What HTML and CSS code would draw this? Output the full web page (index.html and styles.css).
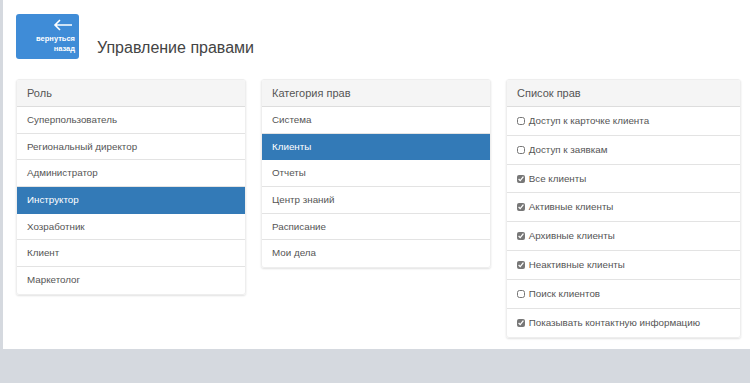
FILE: index.html
```html
<!DOCTYPE html>
<html lang="ru">
<head>
  <meta charset="UTF-8">
  <title>Управление правами</title>
  <link rel="stylesheet" href="styles.css">
</head>
<body>
  <div class="page">
    <header class="top">
      <a class="back-btn" href="#">
        <svg class="back-icon" width="20" height="12" viewBox="0 0 20 12">
          <path d="M19 6H2M7 1L2 6l5 5" fill="none" stroke="#fff" stroke-width="1.6"/>
        </svg>
        <span>вернуться<br>назад</span>
      </a>
      <h1>Управление правами</h1>
    </header>

    <main class="columns">
      <section class="panel">
        <div class="panel-head">Роль</div>
        <ul class="list">
          <li>Суперпользователь</li>
          <li>Региональный директор</li>
          <li>Администратор</li>
          <li class="active">Инструктор</li>
          <li>Хозработник</li>
          <li>Клиент</li>
          <li>Маркетолог</li>
        </ul>
      </section>

      <section class="panel">
        <div class="panel-head">Категория прав</div>
        <ul class="list">
          <li>Система</li>
          <li class="active">Клиенты</li>
          <li>Отчеты</li>
          <li>Центр знаний</li>
          <li>Расписание</li>
          <li>Мои дела</li>
        </ul>
      </section>

      <section class="panel wide">
        <div class="panel-head">Список прав</div>
        <ul class="list checks">
          <li><label><input type="checkbox"> Доступ к карточке клиента</label></li>
          <li><label><input type="checkbox"> Доступ к заявкам</label></li>
          <li><label><input type="checkbox" checked> Все клиенты</label></li>
          <li><label><input type="checkbox" checked> Активные клиенты</label></li>
          <li><label><input type="checkbox" checked> Архивные клиенты</label></li>
          <li><label><input type="checkbox" checked> Неактивные клиенты</label></li>
          <li><label><input type="checkbox"> Поиск клиентов</label></li>
          <li><label><input type="checkbox" checked> Показывать контактную информацию</label></li>
        </ul>
      </section>
    </main>
  </div>
  <div class="footer"></div>
</body>
</html>
```

FILE: styles.css
```css
* {
  margin: 0;
  padding: 0;
  box-sizing: border-box;
}

body {
  font-family: 'Liberation Sans', Arial, sans-serif;
  background-color: #d5d9df;
  color: #555;
}

.page {
  background-color: #fff;
  margin-left: 3px;
  height: 349px;
  padding: 14px 9px 0 13px;
}

.top {
  display: flex;
  align-items: flex-end;
  gap: 18px;
  height: 45px;
}

.back-btn {
  width: 63px;
  height: 45px;
  background-color: #3f8cd7;
  border-radius: 3px;
  color: #fff;
  text-decoration: none;
  display: flex;
  flex-direction: column;
  align-items: flex-end;
  padding: 5px 4px 0 0;
  font-size: 7.5px;
  font-weight: bold;
  line-height: 10px;
  text-align: right;
}

.back-icon {
  margin: 0 2px 3px 0;
}

h1 {
  font-size: 16px;
  font-weight: normal;
  color: #444;
  margin-bottom: 2px;
}

.columns {
  display: grid;
  grid-template-columns: 230px 230px 235px;
  gap: 15px;
  margin-top: 20px;
  align-items: start;
}

.panel {
  border-radius: 3px;
  box-shadow: 0 1px 2px rgba(0, 0, 0, 0.12);
  border: 1px solid #eee;
  overflow: hidden;
}

.panel-head {
  background-color: #f5f5f5;
  border-bottom: 1px solid #ddd;
  height: 27px;
  padding: 0 10px;
  line-height: 26px;
  font-size: 11px;
  color: #555;
}

.list {
  list-style: none;
}

.list li {
  font-size: 9.8px;
  color: #555;
  padding: 0 10px;
  height: 26.7px;
  line-height: 26px;
  border-bottom: 1px solid #e3e3e3;
}

.list li:last-child {
  border-bottom: none;
}

.list li.active {
  background-color: #337ab7;
  color: #fff;
  border-color: #337ab7;
}

.checks li {
  height: 28.8px;
  line-height: 28px;
}

.checks input {
  width: 8px;
  height: 8px;
  margin-right: 1px;
  vertical-align: -1px;
  accent-color: #777;
}
```
